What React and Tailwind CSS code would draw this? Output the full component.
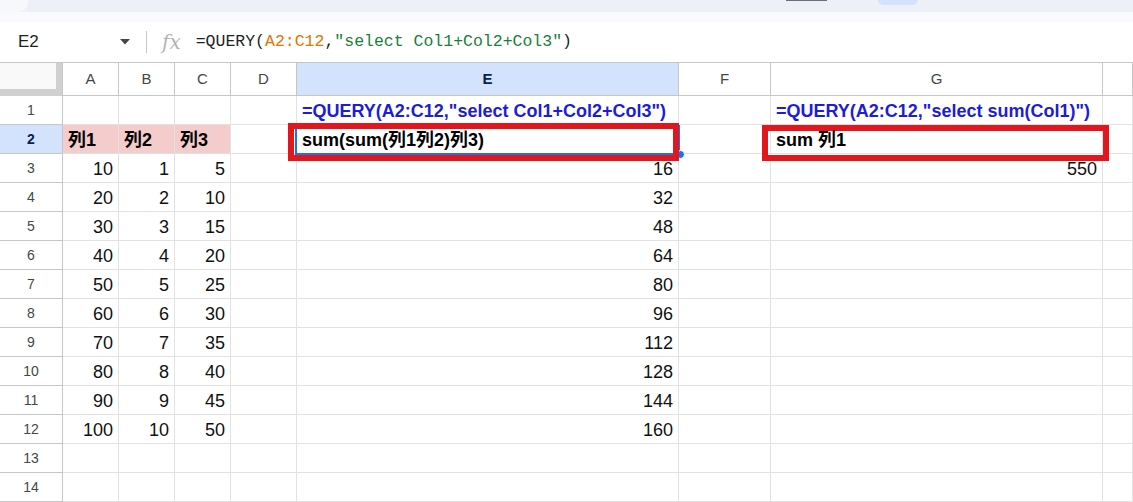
import React from "react";

const FONT = { fontFamily: '"Liberation Sans", Arial, "Noto Sans CJK JP", sans-serif' };

const colHeaders = ["A", "B", "C", "D", "E", "F", "G", ""];

const A = [10, 20, 30, 40, 50, 60, 70, 80, 90, 100];
const B = [1, 2, 3, 4, 5, 6, 7, 8, 9, 10];
const C = [5, 10, 15, 20, 25, 30, 35, 40, 45, 50];
const E = [16, 32, 48, 64, 80, 96, 112, 128, 144, 160];

function rowCells(r) {
  const empty = { text: "" };
  if (r === 1) {
    return [
      empty, empty, empty, empty,
      { text: '=QUERY(A2:C12,"select Col1+Col2+Col3")', blue: true },
      empty,
      { text: '=QUERY(A2:C12,"select sum(Col1)")', blue: true },
      empty,
    ];
  }
  if (r === 2) {
    return [
      { text: "列1", bold: true, pink: true },
      { text: "列2", bold: true, pink: true },
      { text: "列3", bold: true, pink: true },
      empty,
      { text: "sum(sum(列1列2)列3)", bold: true },
      empty,
      { text: "sum 列1", bold: true },
      empty,
    ];
  }
  if (r >= 3 && r <= 12) {
    const i = r - 3;
    return [
      { text: String(A[i]), num: true },
      { text: String(B[i]), num: true },
      { text: String(C[i]), num: true },
      empty,
      { text: String(E[i]), num: true },
      empty,
      r === 3 ? { text: "550", num: true } : empty,
      empty,
    ];
  }
  return [empty, empty, empty, empty, empty, empty, empty, empty];
}

function Cell({ c }) {
  let cls =
    "h-[29px] border-r border-b border-[#e2e2e2] flex items-end pb-[3px] px-[5px] whitespace-nowrap overflow-visible text-[18px] leading-[20px] ";
  if (c.pink) cls += "bg-[#f4cccc] ";
  if (c.num) cls += "justify-end text-[#111] ";
  if (c.bold) cls += "font-bold text-black ";
  if (c.blue) cls += "font-bold text-[#1d1dd6] ";
  return (
    <div className={cls} style={FONT}>
      <span className="relative z-10">{c.text}</span>
    </div>
  );
}

export default function App() {
  const rows = Array.from({ length: 14 }, (_, i) => i + 1);
  return (
    <div className="w-[1133px] h-[502px] overflow-hidden bg-white" style={FONT}>
      {/* top strip */}
      <div className="h-[12px] bg-[#edf1f7] flex">
        <div className="w-[28px] h-[12px] bg-[#f6f8fb] rounded-br-[10px]" />
        <div className="ml-[758px] w-[41px] h-[1px] bg-[#6b6f75]" />
        <div className="ml-[51px] w-[40px] h-[5px] bg-[#d3e3fd] rounded-b-[5px]" />
      </div>
      <div className="h-[10px] bg-[#f8fafd]" />
      {/* formula bar */}
      <div className="h-[40px] flex items-center">
        <div className="w-[146px] flex items-center pl-[18px]">
          <span className="text-[17px] text-[#1f1f1f] w-[102px]">E2</span>
          <svg width="10" height="6" viewBox="0 0 10 6">
            <path d="M0 0 L10 0 L5 5.5 Z" fill="#444746" />
          </svg>
        </div>
        <div className="w-[1px] h-[22px] bg-[#c7c7c7]" />
        <span
          className="ml-[15px] text-[20px] italic text-[#b4b4b4] leading-none"
          style={{ fontFamily: '"DejaVu Serif", "Liberation Serif", serif' }}
        >
          fx
        </span>
        <div
          className="ml-[15px] text-[16.5px] text-[#1f1f1f] whitespace-nowrap"
          style={{ fontFamily: '"Liberation Mono", "DejaVu Sans Mono", monospace' }}
        >
          =QUERY(<span className="text-[#e37400]">A2:C12</span>,
          <span className="text-[#188038]">"select Col1+Col2+Col3"</span>)
        </div>
      </div>
      {/* grid */}
      <div className="relative border-t border-[#c4c7c5]">
        <div className="grid grid-cols-[63px_56px_56px_56px_66px_382px_92px_332px_30px]">
          {/* header row */}
          <div className="h-[33px] bg-[#f8f9fa] border-r border-[#c4c7c5] flex">
            <div className="flex-1 flex flex-col">
              <div className="flex-1 bg-[#f9f9f9]" />
              <div className="h-[7px] bg-[#d0d0d0]" />
            </div>
            <div className="w-[6px] bg-[#d0d0d0]" />
          </div>
          {colHeaders.map((h, i) => (
            <div
              key={i}
              className={
                "h-[33px] border-r border-b border-[#c4c7c5] flex items-center justify-center text-[15px] " +
                (h === "E"
                  ? "bg-[#d3e3fd] font-bold text-[#0b1f4b]"
                  : "bg-white text-[#444746]")
              }
            >
              {h}
            </div>
          ))}
          {rows.map((r) => (
            <React.Fragment key={r}>
              <div
                className={
                  "h-[29px] border-r border-b border-[#c4c7c5] flex items-center justify-center text-[14px] " +
                  (r === 2
                    ? "bg-[#d3e3fd] font-bold text-[#0b1f4b]"
                    : "bg-white text-[#444746]")
                }
              >
                {r}
              </div>
              {rowCells(r).map((c, i) => (
                <Cell key={i} c={c} />
              ))}
            </React.Fragment>
          ))}
        </div>
        {/* selection on E2 */}
        <div className="absolute left-[295px] top-[62px] w-[385px] h-[30px] border-2 border-[#1a73e8] pointer-events-none" />
        <div className="absolute left-[676px] top-[87px] w-[9px] h-[9px] rounded-full bg-[#1a73e8] border border-white" />
        {/* red annotation boxes */}
        <div className="absolute left-[288px] top-[60px] w-[391px] h-[38px] border-[6px] border-[#e3161d] pointer-events-none" />
        <div className="absolute left-[762px] top-[62px] w-[347px] h-[36px] border-[6px] border-[#e3161d] pointer-events-none" />
      </div>
    </div>
  );
}
